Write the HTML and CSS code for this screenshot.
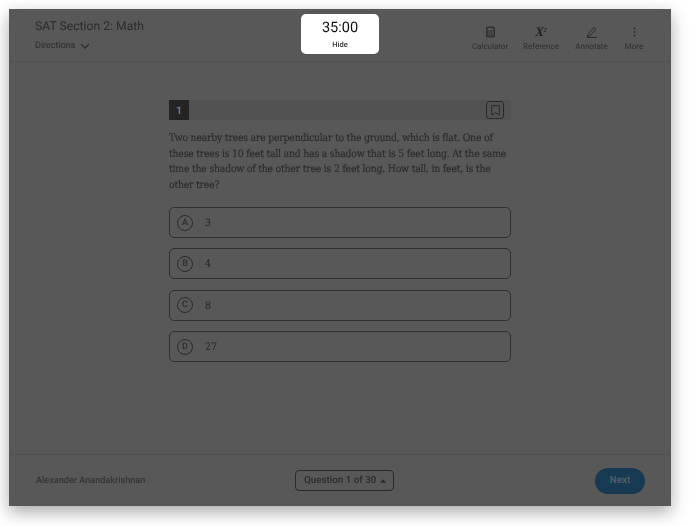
FILE: index.html
```html
<!DOCTYPE html>
<html lang="en">
<head>
<meta charset="utf-8">
<title>SAT Section 2: Math</title>
<link rel="stylesheet" href="styles.css">
</head>
<body>
<div class="window">
  <header class="top">
    <div class="section">
      <div class="title">SAT Section 2: Math</div>
      <div class="directions">Directions
        <svg class="chev" width="10" height="6" viewBox="0 0 10 6"><path d="M1 1l4 4 4-4" fill="none" stroke="#2b2b2b" stroke-width="1.3"/></svg>
      </div>
    </div>
    <nav class="tools">
      <div class="tool tool-calc">
        <svg width="9" height="11" viewBox="0 0 9 11"><rect x=".5" y=".5" width="8" height="10" rx="1" fill="#3c3c3c" stroke="#2e2e2e"/><rect x="2" y="2" width="5" height="1.6" fill="#5c5c5c"/><path d="M2 5.5h5M2 7.5h5" stroke="#5c5c5c" stroke-dasharray="1 1"/></svg>
        <span>Calculator</span>
      </div>
      <div class="tool tool-ref">
        <span class="ref-icon">X<sup>2</sup></span>
        <span>Reference</span>
      </div>
      <div class="tool tool-ann">
        <svg width="12" height="12" viewBox="0 0 12 12"><path d="M2 8.3l5.8-6.8 2 1.7-5.8 6.8-2.6.7zM1 11.5h10" fill="none" stroke="#2b2b2b" stroke-width="1"/></svg>
        <span>Annotate</span>
      </div>
      <div class="tool tool-more">
        <svg width="3" height="11" viewBox="0 0 3 11"><circle cx="1.5" cy="2" r=".9" fill="#2b2b2b"/><circle cx="1.5" cy="5.5" r=".9" fill="#2b2b2b"/><circle cx="1.5" cy="9" r=".9" fill="#2b2b2b"/></svg>
        <span>More</span>
      </div>
    </nav>
  </header>

  <main class="content">
    <div class="question">
      <div class="qbar">
        <div class="qnum">1</div>
        <div class="mark">
          <svg width="9" height="11" viewBox="0 0 9 11"><path d="M.7.7h7.6v9.4L4.5 7.6.7 10.1z" fill="none" stroke="#2b2b2b" stroke-width="1"/></svg>
        </div>
      </div>
      <p class="prompt">Two nearby trees are perpendicular to the ground, which is flat. One of these trees is 10 feet tall and has a shadow that is 5 feet long. At the same time the shadow of the other tree is 2 feet long. How tall, in feet, is the other tree?</p>
      <div class="choices">
        <div class="choice"><span class="letter">A</span><span class="answer">3</span></div>
        <div class="choice"><span class="letter">B</span><span class="answer">4</span></div>
        <div class="choice"><span class="letter">C</span><span class="answer">8</span></div>
        <div class="choice"><span class="letter">D</span><span class="answer">27</span></div>
      </div>
    </div>
  </main>

  <footer class="bottom">
    <div class="student">Alexander Anandakrishnan</div>
    <div class="progress">Question 1 of 30 <svg width="6" height="4" viewBox="0 0 7 4"><path d="M3.5 0L7 4H0z" fill="#2b2b2b"/></svg></div>
    <div class="next">Next</div>
  </footer>

  <div class="timer">
    <div class="time">35:00</div>
    <div class="hide">Hide</div>
  </div>
</div>
</body>
</html>
```
FILE: styles.css
```css
* { box-sizing: border-box; }
html, body { margin: 0; height: 100%; background: #fff; overflow: hidden; }
body { padding: 9px 27px 20px 9px; font-family: Roboto, "Liberation Sans", sans-serif; color: #2b2b2b; text-rendering: geometricPrecision; }

.window {
  position: relative;
  width: 662px;
  height: 497px;
  background: #585858;
  display: flex;
  flex-direction: column;
  box-shadow: 0 6px 16px rgba(0, 0, 0, .34);
}

.top {
  height: 53px;
  flex: none;
  border-bottom: 1px solid #525252;
  display: flex;
  justify-content: space-between;
  filter: blur(.3px);
}
.section { padding: 9px 0 0 26px; }
.title { font-size: 12.2px; line-height: 16px; color: #2b2b2b; }
.directions { margin-top: 5px; font-size: 9px; line-height: 14px; display: flex; align-items: center; gap: 5px; }

.tools { display: flex; padding: 17px 27px 0 0; }
.tool { display: flex; flex-direction: column; align-items: center; font-size: 8px; line-height: 11px; color: #2e2e2e; }
.tool svg, .ref-icon { height: 12px; margin-bottom: 3px; }
.tool-calc { width: 36px; }
.tool-ref { width: 36px; margin-left: 15px; }
.tool-ann { width: 33px; margin-left: 16px; }
.tool-more { width: 20px; margin-left: 16px; }
.ref-icon { font: italic bold 13px/12px "Liberation Serif", serif; color: #1f1f1f; }
.ref-icon sup { font-size: 6px; line-height: 0; vertical-align: 4px; }

.content { flex: 1; display: flex; justify-content: center; padding-top: 38px; filter: blur(.2px); }
.question { width: 342px; }
.qbar { height: 20px; background: #525252; display: flex; justify-content: space-between; align-items: center; }
.qnum { width: 20px; height: 20px; background: #242424; color: #808080; font-size: 10.5px; font-weight: 500; display: flex; align-items: center; justify-content: center; }
.mark { width: 18px; height: 18px; margin-right: 7px; border: 1px solid #2b2b2b; border-radius: 3px; display: flex; align-items: center; justify-content: center; }

.prompt { margin: 11px 0 14px; font: 10.4px/15.5px "DejaVu Serif Condensed", "DejaVu Serif", serif; font-stretch: condensed; letter-spacing: -.22px; -webkit-text-stroke: .12px #2b2b2b; color: #2b2b2b; }
.choices { display: flex; flex-direction: column; gap: 10.4px; }
.choice { height: 31px; border: 1px solid #303030; border-radius: 5px; display: flex; align-items: center; padding-left: 7px; }
.letter { width: 16px; height: 16px; border: 1.3px solid #2b2b2b; border-radius: 50%; font-size: 9px; font-weight: 700; color: #333; display: flex; align-items: center; justify-content: center; }
.answer { margin-left: 12px; padding-top: 1px; font: 10.4px/14px "DejaVu Serif Condensed", "DejaVu Serif", serif; font-stretch: condensed; -webkit-text-stroke: .12px #2b2b2b; color: #2b2b2b; }

.bottom { height: 52px; flex: none; border-top: 1px solid #525252; display: flex; align-items: center; padding: 0 26px 0 27px; filter: blur(.3px); }
.student { font-size: 9.1px; font-weight: 500; color: #333; width: 259px; }
.progress { height: 21px; padding: 0 7px 0 8px; border: 1px solid #2b2b2b; border-radius: 4px; font-size: 9.8px; font-weight: 500; display: flex; align-items: center; gap: 4px; }
.next { margin-left: auto; width: 50px; height: 26px; border-radius: 13px; background: #173a52; color: #595f64; font-size: 10px; font-weight: 500; display: flex; align-items: center; justify-content: center; }

.timer { position: absolute; left: 292px; top: 5px; width: 78px; height: 40px; background: #fff; border-radius: 5px; text-align: center; color: #111; filter: blur(.2px); }
.time { margin-top: 5px; font-size: 14.5px; line-height: 18px; }
.hide { margin-top: 3px; font-size: 7.5px; line-height: 10px; font-weight: 500; color: #333; }
```
